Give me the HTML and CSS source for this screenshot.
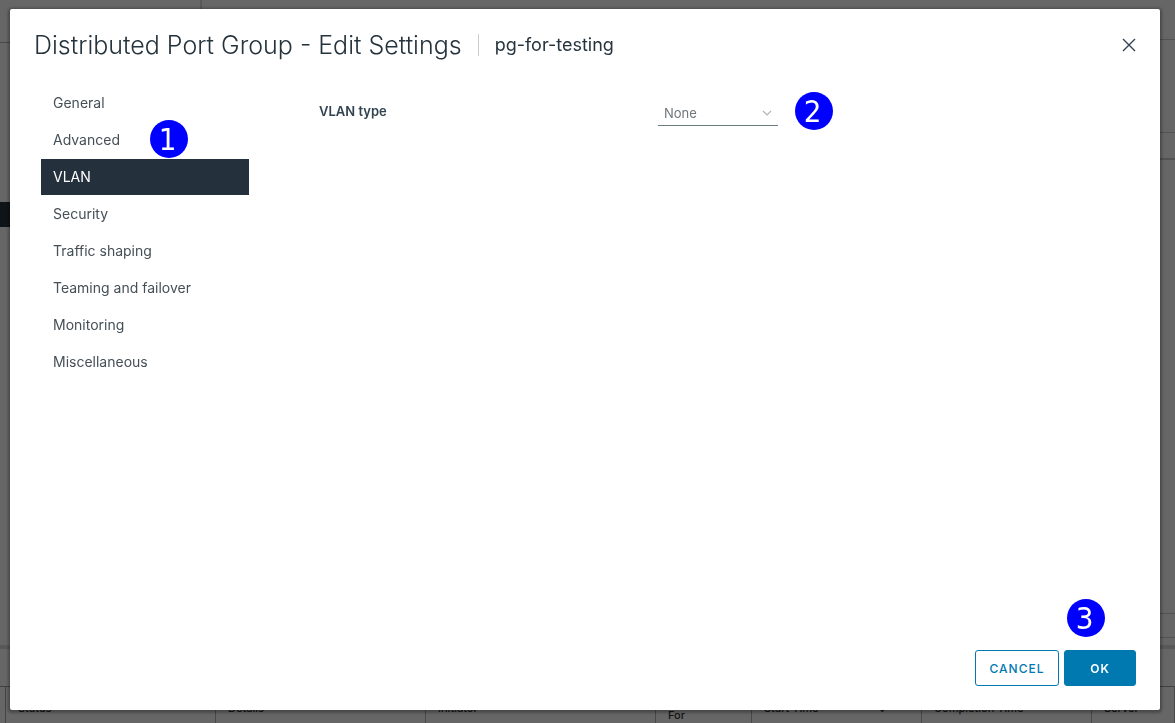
FILE: index.html
```html
<!DOCTYPE html>
<html lang="en">
<head>
<meta charset="utf-8">
<meta name="viewport" content="width=device-width, initial-scale=1">
<title>Distributed Port Group - Edit Settings</title>
<link rel="stylesheet" href="styles.css">
</head>
<body>
<div class="app" aria-hidden="true">
  <div class="workspace">
    <div class="tree">
      <div class="tree-tabs"></div>
      <div class="tree-selected"></div>
    </div>
    <div class="detail">
      <div class="detail-title"></div>
      <div class="detail-tabs"></div>
      <div class="detail-toolbar"></div>
      <div class="detail-body"></div>
      <div class="detail-footer"></div>
    </div>
  </div>
  <div class="tasks-bar"></div>
  <table class="tasks">
    <thead>
      <tr><th class="col-status">Status</th><th class="col-details">Details</th><th class="col-initiator">Initiator</th><th class="col-queued">Queued<br>For</th><th class="col-start">Start Time <span class="sort">↓</span></th><th class="col-completion">Completion Time</th><th>Server</th></tr>
    </thead>
  </table>
</div>

<div class="backdrop">
  <section class="modal" role="dialog" aria-modal="true" aria-labelledby="modal-title">
    <header class="modal-header">
      <h1 class="modal-title" id="modal-title">Distributed Port Group - Edit Settings</h1>
      <span class="modal-subject">pg-for-testing</span>
      <button class="close" type="button" aria-label="Close">
        <svg viewBox="0 0 14 14" width="14" height="14"><path d="M1 1l12 12M13 1L1 13" fill="none" stroke="currentColor" stroke-width="1.4"/></svg>
      </button>
    </header>
    <div class="modal-body">
      <nav class="steps" aria-label="Settings pages">
        <a class="step" href="#general">General</a>
        <a class="step" href="#advanced">Advanced</a>
        <a class="step active" href="#vlan" aria-current="page">VLAN<span class="badge badge-nav">1</span></a>
        <a class="step" href="#security">Security</a>
        <a class="step" href="#traffic">Traffic shaping</a>
        <a class="step" href="#teaming">Teaming and failover</a>
        <a class="step" href="#monitoring">Monitoring</a>
        <a class="step" href="#misc">Miscellaneous</a>
      </nav>
      <form class="fields">
        <label class="field-label" for="vlan-type">VLAN type</label>
        <div class="select-wrap">
          <select class="select" id="vlan-type"><option>None</option></select>
          <svg class="caret" viewBox="0 0 10 6" width="10" height="6"><path d="M1 1l4 4 4-4" fill="none" stroke="currentColor" stroke-width="1.2"/></svg>
          <span class="badge badge-select">2</span>
        </div>
      </form>
    </div>
    <footer class="modal-footer">
      <button class="btn btn-outline" type="button">CANCEL</button>
      <button class="btn btn-primary" type="button">OK<span class="badge badge-ok">3</span></button>
    </footer>
  </section>
</div>
</body>
</html>
```
FILE: styles.css
```css
* {
  box-sizing: border-box;
}

body {
  margin: 0;
  height: 100vh;
  overflow: hidden;
  font-family: Inter, "Liberation Sans", sans-serif;
  font-size: 14px;
  color: #314351;
  background: #fff;
}

/* Application behind the dialog */
.app {
  height: 100vh;
  display: flex;
  flex-direction: column;
  overflow: hidden;
}

.workspace {
  flex: 1;
  display: flex;
}

.tree {
  width: 202px;
  border-right: 2px solid #ddd;
}

.tree-tabs {
  height: 43px;
  border-bottom: 1px solid #b5b5b5;
}

.tree-selected {
  height: 25px;
  margin-top: 159px;
  background: #25333d;
}

.detail {
  flex: 1;
  display: flex;
  flex-direction: column;
}

.detail-title {
  height: 40px;
  border-bottom: 1px solid #ccc;
}

.detail-tabs {
  height: 93px;
  border-bottom: 1px solid #ccc;
}

.detail-toolbar {
  height: 27px;
  border-bottom: 2px solid #ccc;
}

.detail-body {
  flex: 1;
  border-bottom: 1px solid #ccc;
}

.detail-footer {
  height: 24px;
  margin-bottom: 7px;
  border-bottom: 1px solid #ccc;
}

.tasks-bar {
  height: 42px;
  border-top: 4px solid #ddd;
  border-bottom: 1px solid #9aa3a8;
}

.tasks {
  width: calc(100% - 5px);
  height: 36px;
  margin-left: 5px;
  table-layout: fixed;
  border-collapse: collapse;
  border-left: 1px solid #aaa;
}

.tasks th {
  height: 36px;
  padding: 13px 12px 0;
  border-right: 1px solid #b5b5b5;
  font-size: 11px;
  line-height: 16px;
  font-weight: 500;
  text-align: left;
  vertical-align: top;
  color: #333;
}

.tasks .col-status { width: 210px; }
.tasks .col-details { width: 210px; }
.tasks .col-initiator { width: 230px; }
.tasks .col-queued { width: 96px; padding-top: 4px; }
.tasks .col-start { width: 170px; }
.tasks .col-completion { width: 170px; }

.sort {
  margin-left: 56px;
}

/* Dialog */
.backdrop {
  position: fixed;
  inset: 0;
  display: flex;
  padding: 9px 15px 13px 10px;
  background: rgba(0, 0, 0, 0.6);
}

.modal {
  flex: 1;
  display: flex;
  flex-direction: column;
  padding: 24px;
  border-radius: 2px;
  background: #fff;
  box-shadow: 0 1px 3px 2px rgba(0, 0, 0, 0.3);
}

.modal-header {
  display: flex;
  align-items: center;
  height: 24px;
}

.modal-title {
  margin: 0;
  font-size: 25px;
  line-height: 24px;
  font-weight: 300;
  color: #25333d;
}

.modal-subject {
  margin-left: 16px;
  padding-left: 16px;
  border-left: 1px solid #ccc;
  font-size: 18px;
  line-height: 22px;
  color: #25333d;
}

.close {
  display: flex;
  margin-left: auto;
  padding: 0;
  border: 0;
  background: none;
  color: #314351;
}

.modal-body {
  flex: 1;
  display: flex;
  padding: 28px 0 0 7px;
}

.steps {
  width: 208px;
  display: flex;
  flex-direction: column;
  gap: 1px;
}

.step {
  position: relative;
  height: 36px;
  padding-left: 12px;
  line-height: 36px;
  color: #454f56;
  text-decoration: none;
}

.step.active {
  background: #25303d;
  color: #fff;
}

.fields {
  flex: 1;
  display: grid;
  grid-template-columns: 339px 120px;
  align-content: start;
  padding: 16px 0 0 70px;
}

.field-label {
  font-size: 13px;
  line-height: 20px;
  font-weight: 600;
}

.select-wrap {
  position: relative;
}

.select {
  width: 100%;
  height: 25px;
  padding: 0 6px;
  border: 0;
  border-bottom: 1px solid #6a7a81;
  border-radius: 0;
  appearance: none;
  background: none;
  font: inherit;
  font-size: 13px;
  color: #707679;
}

.caret {
  position: absolute;
  top: 9px;
  right: 6px;
  color: #b3b3b3;
  pointer-events: none;
}

.modal-footer {
  display: flex;
  justify-content: flex-end;
  gap: 5px;
}

.btn {
  position: relative;
  min-width: 72px;
  height: 36px;
  padding: 0 12px;
  border: 1px solid #0079b1;
  border-radius: 3px;
  background: #fff;
  font: inherit;
  font-size: 12px;
  font-weight: 500;
  letter-spacing: 1px;
  color: #0079b1;
}

.btn-outline {
  min-width: 84px;
}

.btn-primary {
  background: #0079b1;
  font-weight: 600;
  color: #fff;
}

/* Numbered callouts */
.badge {
  position: absolute;
  width: 38px;
  height: 38px;
  padding-right: 3px;
  border-radius: 50%;
  background: #00f;
  font-family: "DejaVu Sans Condensed", "DejaVu Sans", sans-serif;
  font-size: 31px;
  font-weight: 400;
  line-height: 38px;
  letter-spacing: normal;
  text-align: center;
  color: #fff;
}

.badge-nav {
  top: -39px;
  left: 109px;
}

.badge-select {
  top: -9px;
  left: 137px;
}

.badge-ok {
  top: -52px;
  left: 2px;
}
```
